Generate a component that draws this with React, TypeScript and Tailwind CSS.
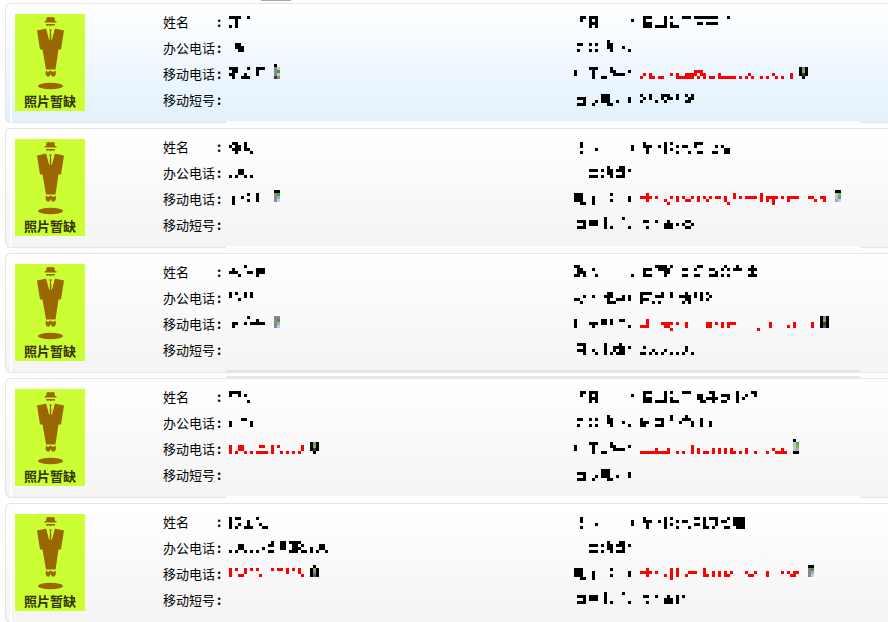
import React from "react";

type Icon = { col: number; rows: string[] };
type Field = { top: number; cells: string; icon?: Icon; red?: boolean };
type Contact = {
  active?: boolean;
  band?: "plain" | "lined";
  values: Field[];
  labels: Field[];
  details: Field[];
};

const CELL = 3;
const ROW_HEIGHT = 26;

const ICON_COLORS: Record<string, string> = {
  k: "#000000",
  d: "#3c3840",
  s: "#5c5868",
  g: "#888888",
  l: "#c4c4c4",
  b: "#a8a8bc",
  v: "#c8c8f4",
  G: "#38a038",
  L: "#68c838",
};

/* Columns are listed per row, "a-b" for a run; rows are split by "/". */
function runs(cells: string) {
  const out: { x: number; y: number; w: number }[] = [];
  cells.split("/").forEach((row, y) => {
    row
      .trim()
      .split(" ")
      .filter(Boolean)
      .forEach((part) => {
        const [a, b] = part.split("-").map(Number);
        out.push({ x: a, y, w: (b === undefined ? a : b) - a + 1 });
      });
  });
  return out;
}

function Mosaic({ field }: { field: Field }) {
  const list = runs(field.cells);
  const icon = field.icon;
  const cols = Math.max(1, ...list.map((r) => r.x + r.w), icon ? icon.col + 3 : 0);
  return (
    <svg
      width={cols * CELL}
      height={ROW_HEIGHT}
      shapeRendering="crispEdges"
      className="block shrink-0"
      aria-hidden="true"
    >
      {list.map((r, i) => (
        <rect
          key={i}
          x={r.x * CELL}
          y={field.top + r.y * CELL}
          width={r.w * CELL}
          height={CELL}
          fill={field.red ? "#ff0000" : "#000000"}
        />
      ))}
      {icon &&
        icon.rows.flatMap((row, y) =>
          row.split("").map((c, x) =>
            ICON_COLORS[c] ? (
              <rect
                key={`${x}-${y}`}
                x={(icon.col + x) * CELL}
                y={field.top + y * CELL}
                width={CELL}
                height={CELL}
                fill={ICON_COLORS[c]}
              />
            ) : null,
          ),
        )}
    </svg>
  );
}

const round = [" ", "kgk", "kLk", "kdk", " k "];

const labelsA: Field[] = [
  { top: 7, cells: "2-3 5-7/2 5 7 19/5-7/5 7" },
  { top: 5, cells: "11/1-2 5 7 11-12/11-12 16/1 5 7 12 18" },
  { top: 3, cells: "/5-7 12/0 6 12-13 18/0 6 13-16/6 9-10" },
  { top: 7, cells: "9-11/1-3 9-11 18/3 7 9-11 14 18/1-3 6 11-12" },
];

const labelsB: Field[] = [
  { top: 8, cells: "2/2 19/7 19/2" },
  { top: 6, cells: "11 15-16/5-7 9 11-12 14-16 18/11-12 16/5-7 9 12 14-16" },
  { top: 4, cells: "/0-2 12/0-2 6 18/0-2 6 12 18/2-3 6" },
  { top: 5, cells: "10 16/1-3 5-7 10/3 5-7 10/1-3 10 12 18" },
];

const labelsC: Field[] = [
  { top: 6, cells: "0-1/1-2 6/1-3/0-1 3 7 19" },
  { top: 7, cells: "11-12/3 6 10-12 16 18/0-1 11 14-16 18/2 11-13" },
  { top: 5, cells: "/0 9-10 12 15-16/0 5-7 9-10 12/0 6 18" },
  { top: 6, cells: "1-3 10 15/3 10 13-16 18/1-3 6 10 13 15-16/3 7 10 12 14-16" },
];

const contacts: Contact[] = [
  {
    active: true,
    band: "plain",
    values: [
      { top: 7, cells: "0-3 6/2/2/0 2" },
      { top: 5, cells: "/2-3/2-4/3-4" },
      {
        top: 3,
        cells: "/0-2 6 9-11/1-2 9/0-1 5 9/1 4-6",
        icon: { col: 15, rows: ["k ", "gl", "gG", "gl", "dg"] },
      },
      { top: 7, cells: "" },
    ],
    labels: labelsA,
    details: [
      { top: 7, cells: "1-3 8 10 14-16 18-25 29/1 8/1-3 8 10 19-20 22-25/1-3 5-8 10-12" },
      { top: 5, cells: "" },
      {
        top: 3,
        red: true,
        cells: "//18-20/1 3 10 12 15-18 20-21 26 36 44 50/0 3-4 6-7 12-17 19 21 23-24 26-31 33 35 37 40 42 45 47 50",
        icon: { col: 53, rows: round },
      },
      { top: 7, cells: "0 3 7-9 12 15 17/1 3 7 9-10 12 16-17/0 5 8 15-16" },
    ],
  },
  {
    band: "plain",
    values: [
      { top: 8, cells: "1-2 5/0 2-3 5/1-3 5-6/2 7" },
      { top: 6, cells: "/3-4/3-4/0 2 5 7" },
      {
        top: 4,
        cells: "/6 9/1 4 9/1 6 9/1",
        icon: { col: 15, rows: ["kk", "gG", "gb", "gv"] },
      },
      { top: 5, cells: "" },
    ],
    labels: labelsB,
    details: [
      { top: 8, cells: "1 8 10 18-20/1-3 6 8 12 14-15 18 25 27/2 8 10 28-29/2 8 12 16 19-20 24-25 28-29" },
      { top: 6, cells: "" },
      {
        top: 4,
        red: true,
        cells: "/2 31 40/0-3 5 10 12 14 17 19 21 23 25-26 28 31 33 35-38 40 42-45 47 49-52 56-57 60-61/2 8 12 15-16 19 22 28 40 42 44 49 58 61/9 29 44",
        icon: { col: 65, rows: ["kk", "lL", "lg", "bv"] },
      },
      { top: 5, cells: "/1-2 5 9 15-16/8-10 12 14 17/2 8-10 15-16" },
    ],
  },
  {
    band: "lined",
    values: [
      { top: 6, cells: "5/1 9-11/0-2 6-7 9-11/3 9" },
      { top: 7, cells: "0 2 5 7/0 5 7/3" },
      {
        top: 5,
        cells: "6/9/1-2 5 7-11/1",
        icon: { col: 15, rows: ["gg", "gG", "gb", "gv"] },
      },
      { top: 6, cells: "" },
    ],
    labels: labelsC,
    details: [
      { top: 6, cells: "5-8 10 19-20 28 32 37/1-3 6-9 14-15 18 23-24 27 29 31-33 36-38/1 8-9 25 37/1-3 8 14-15 18-19 23-25 27 29 36-38" },
      { top: 7, cells: "0-3 7 10 15 18 20 22/0 5-7 10 13-16 18 20 23/0-2 15-16 20 22/0 4 6 14 16" },
      {
        top: 5,
        red: true,
        cells: "/2/2 7-10 12 15 22-23 25 27 29-31 43 51 57/0-2 8-9 15 22-23 27 29 43 49 51 57/10 39",
        icon: { col: 60, rows: ["kgk", "kLk", "kdk", "ksk"] },
      },
      { top: 6, cells: "/1 15/4 8 15/0-1 3 5 7 10 12 14 17" },
    ],
  },
  {
    band: "plain",
    values: [
      { top: 7, cells: "0-3/0 3 5//6" },
      { top: 5, cells: "/4-5/0 7/0 7" },
      {
        top: 3,
        red: true,
        cells: "//0 3-4 10-11 14 16 24/0 3-4 14 24/0 2 5 7 9-12 14 17 19 21 23",
        icon: { col: 27, rows: round },
      },
      { top: 7, cells: "" },
    ],
    labels: labelsA,
    details: [
      { top: 7, cells: "1-3 8 10 14-16 23-24 32 37-38/1 8 19-20 24 27-29 32 35 38/1-3 8 10 19-20 22-25 29 32 34/1-3 5-8 10-12 20-21 24 27-28 32" },
      { top: 5, cells: "10 15/0 5-7 10 14-16 20/0-2 7 13 17 20 23/0-1 5-7 17 20 23" },
      {
        top: 3,
        red: true,
        cells: "//17/5 9 17 19 24 26 28 30 35 44 47/0-9 12 14 17 19 21-22 24 26 28 30-31 33 35 38 42 45-48",
        icon: { col: 51, rows: ["k ", "lg", "lL", "lb", "kk"] },
      },
      { top: 7, cells: "" },
    ],
  },
  {
    values: [
      { top: 8, cells: "0 2-3 9/0 6/0 3 6 10/0 2 5-7 11-12" },
      { top: 6, cells: "14 17-18 20-23/3-4 13-14 17-18 21-22 24 30-31/3-4 11 17-18 21-23 27 30-31/0 2 5 7 9 13-14 20-22 24-25 27 29 32" },
      {
        top: 4,
        red: true,
        cells: "/0 2 5 7 9 14 16-17 19 21 23/0 5 19 23/0 3-4 10 24",
        icon: { col: 27, rows: [" k ", "kLk", "kgk", "ksk"] },
      },
      { top: 5, cells: "" },
    ],
    labels: labelsB,
    details: [
      { top: 8, cells: "1 8 10 18-19 21 23-25 29 31-34/1-3 6 8 12 14-15 21 25 27-28 31-34/2 8 10 18-19 21 25 31-34/2 8 12 16 21-22 24 28-29 32-34" },
      { top: 6, cells: "" },
      {
        top: 4,
        red: true,
        cells: "/2 10 12 21/0-3 5 10 12 16-18 21 24 26 28 30 35 38 42 47 49 51-52/2 8 10 12 15 21-22 24 26 28-29 36-37 42 50-51/10",
        icon: { col: 56, rows: ["kk", "gG", "gb", "gv"] },
      },
      { top: 5, cells: "/1-2 5 9 12 14/8-10 12/2 8-10 12" },
    ],
  },
];

const fieldNames = ["姓名", "办公电话", "移动电话", "移动短号"];

function Portrait() {
  return (
    <figure className="flex h-[97px] w-[70px] shrink-0 flex-col bg-[#ccff33]">
      <svg viewBox="0 0 70 78" className="block h-[78px] w-[70px]" fill="#996600" aria-hidden="true">
        <path d="M31.5 3.5 34 3l1.3.6L37 3l2.5.6.5 3.4 1.5.3V8.500h-12V7.300l1.500-.3Z" />
        <path d="M31 10h9l-.8 2-2.200-.7-1.500 1-1.500-1-2.200.7Z" />
        <path d="M22 16.500 31.500 14.500 34.500 25 35 17.500 34 15.500h3L36 17.500 36.700 25 39.500 14.500 49 16.500 46 35.500H43.500L40.500 55.500H31L27.500 35.500H25Z" />
        <path d="M31.500 14 34.500 25.500M39.500 14 36.500 25.500" stroke="#ccff33" strokeWidth="1" />
        <path d="M31 56.500 33 58l2.500-1.500L38 58l2.500-1.500.5 3.500-1.500 2.500H37L35.500 60 34.500 62.500H32L30.500 60Z" />
        <ellipse cx="35.500" cy="72" rx="12.500" ry="3.300" />
      </svg>
      <figcaption className="text-center text-[13px] leading-[18px] font-bold text-[#333300]">照片暂缺</figcaption>
    </figure>
  );
}

function ContactCard({ contact }: { contact: Contact }) {
  return (
    <li className="relative">
      <article
        className={`flex h-[120px] overflow-hidden rounded-l-[6px] border border-r-0 border-[#e4e4e4] bg-linear-to-b ${
          contact.active ? "from-white to-[#e2f1fd]" : "from-white to-[#f4f4f4]"
        }`}
      >
        <div className="-my-px ml-[4px] w-[2px] shrink-0 bg-white" />
        <div className="ml-[3px] shrink-0 pt-[10px]">
          <Portrait />
        </div>
        <dl className="ml-[78px] min-w-0 flex-1 pt-[5px]">
          {fieldNames.map((name, i) => (
            <div key={name} className="grid h-[26px] grid-cols-[66px_345px_66px_1fr]">
              <dt className="flex text-[13px] leading-[25px]">
                <span className="w-[54px]">{name}</span>
                <span className="font-bold">:</span>
              </dt>
              <dd>
                <Mosaic field={contact.values[i]} />
              </dd>
              <dt>
                <Mosaic field={contact.labels[i]} />
              </dt>
              <dd>
                <Mosaic field={contact.details[i]} />
              </dd>
            </div>
          ))}
        </dl>
      </article>
      {contact.band === "plain" && (
        <div className="absolute top-[118px] right-[28px] left-[221px] h-[9px] bg-[#fefefe]" />
      )}
      {contact.band === "lined" && (
        <div className="absolute top-[117px] right-[28px] left-[221px] h-[9px] border-y-3 border-[#e6e6e6] bg-white" />
      )}
    </li>
  );
}

export default function App() {
  return (
    <main className="h-screen overflow-hidden bg-white font-['Noto_Sans_CJK_SC',sans-serif] text-black">
      <div className="ml-[261px] h-px w-[30px] bg-[#a8a8a8]" />
      <ul className="mt-[2px] ml-[5px] flex flex-col gap-[5px]">
        {contacts.map((contact, i) => (
          <ContactCard key={i} contact={contact} />
        ))}
      </ul>
    </main>
  );
}
